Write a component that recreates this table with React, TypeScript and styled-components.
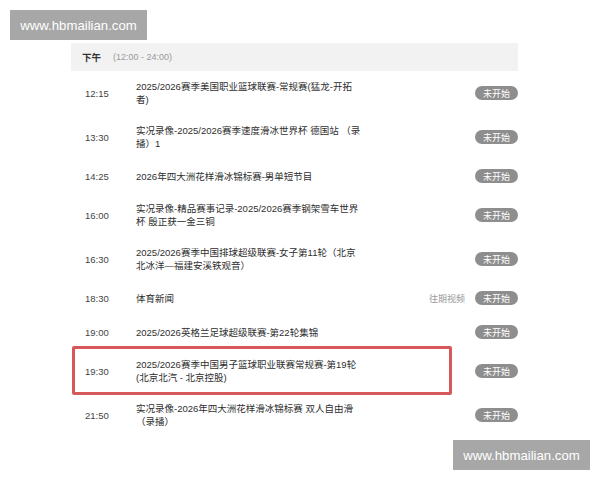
import * as React from 'react';
import styled, { createGlobalStyle } from 'styled-components';

type Program = {
  time: string;
  title: string;
  replay?: boolean;
  highlight?: boolean;
};

const programs: Program[] = [
  { time: '12:15', title: '2025/2026赛季美国职业篮球联赛-常规赛(猛龙-开拓者)' },
  { time: '13:30', title: '实况录像-2025/2026赛季速度滑冰世界杯 德国站 （录播）1' },
  { time: '14:25', title: '2026年四大洲花样滑冰锦标赛-男单短节目' },
  { time: '16:00', title: '实况录像-精品赛事记录-2025/2026赛季钢架雪车世界杯 殷正获一金三铜' },
  { time: '16:30', title: '2025/2026赛季中国排球超级联赛-女子第11轮（北京北冰洋—福建安溪铁观音）' },
  { time: '18:30', title: '体育新闻', replay: true },
  { time: '19:00', title: '2025/2026英格兰足球超级联赛-第22轮集锦' },
  { time: '19:30', title: '2025/2026赛季中国男子篮球职业联赛常规赛-第19轮 (北京北汽 - 北京控股)', highlight: true },
  { time: '21:50', title: '实况录像-2026年四大洲花样滑冰锦标赛 双人自由滑（录播）' },
];

const App: React.FC = () => {
  return (
    <>
      <GlobalStyle />
      <Page>
        <Watermark corner="top">www.hbmailian.com</Watermark>
        <Schedule>
          <PeriodHeader>
            <PeriodName>下午</PeriodName>
            <PeriodRange>(12:00 - 24:00)</PeriodRange>
          </PeriodHeader>

          {programs.map((p) => (
            <Row key={p.time}>
              <Time>{p.time}</Time>
              <Title>{p.title}</Title>
              <Side>
                {p.replay ? <Replay>往期视频</Replay> : null}
                <Status>未开始</Status>
              </Side>
              {p.highlight ? <Highlight /> : null}
            </Row>
          ))}
        </Schedule>
        <Watermark corner="bottom">www.hbmailian.com</Watermark>
      </Page>
    </>
  );
};

export default App;

const GlobalStyle = createGlobalStyle`
  html, body {
    margin: 0;
    padding: 0;
    background: #ffffff;
  }

  body {
    font-family: 'Liberation Sans', 'Noto Sans CJK SC', sans-serif;
  }
`;

const Page = styled.div`
  position: relative;
  width: 600px;
  height: 480px;
  overflow: hidden;
  padding: 43px 0 0 71px;
  box-sizing: border-box;
`;

const Watermark = styled.div<{ corner: 'top' | 'bottom' }>`
  position: absolute;
  ${({ corner }) =>
    corner === 'top' ? 'top: 10px; left: 10px;' : 'top: 440px; left: 453px;'}
  width: 137px;
  height: 30px;
  display: flex;
  align-items: center;
  justify-content: center;
  background: #a7a7a7;
  color: #ffffff;
  font-family: 'Liberation Sans', Arial, sans-serif;
  font-size: 13.2px;
`;

const Schedule = styled.div`
  width: 447px;
`;

const PeriodHeader = styled.div`
  height: 28px;
  display: flex;
  align-items: center;
  padding-left: 11px;
  background: #f2f2f2;
`;

const PeriodName = styled.span`
  font-size: 9.5px;
  font-weight: bold;
  color: #333333;
  width: 31px;
`;

const PeriodRange = styled.span`
  font-size: 9px;
  color: #999999;
`;

const Row = styled.div`
  position: relative;
  display: flex;
  align-items: center;
  min-height: 34px;
  padding: 9px 0;
  box-sizing: border-box;
`;

const Time = styled.div`
  width: 51px;
  padding-left: 14px;
  flex-shrink: 0;
  font-size: 9.5px;
  color: #444444;
`;

const Title = styled.div`
  width: 227px;
  font-size: 9.5px;
  line-height: 13px;
  color: #2e2e2e;
`;

const Side = styled.div`
  flex: 1;
  display: flex;
  align-items: center;
  justify-content: flex-end;
  gap: 10px;
`;

const Replay = styled.span`
  font-size: 9px;
  color: #999999;
`;

const Status = styled.span`
  width: 43px;
  height: 14px;
  border-radius: 7px;
  background: #8e8e8e;
  color: #ffffff;
  font-size: 9px;
  display: flex;
  align-items: center;
  justify-content: center;
`;

const Highlight = styled.div`
  position: absolute;
  left: 1px;
  top: -3px;
  width: 380px;
  height: 49px;
  border: 3px solid #d6585b;
  border-radius: 2px;
  box-sizing: border-box;
  pointer-events: none;
`;
